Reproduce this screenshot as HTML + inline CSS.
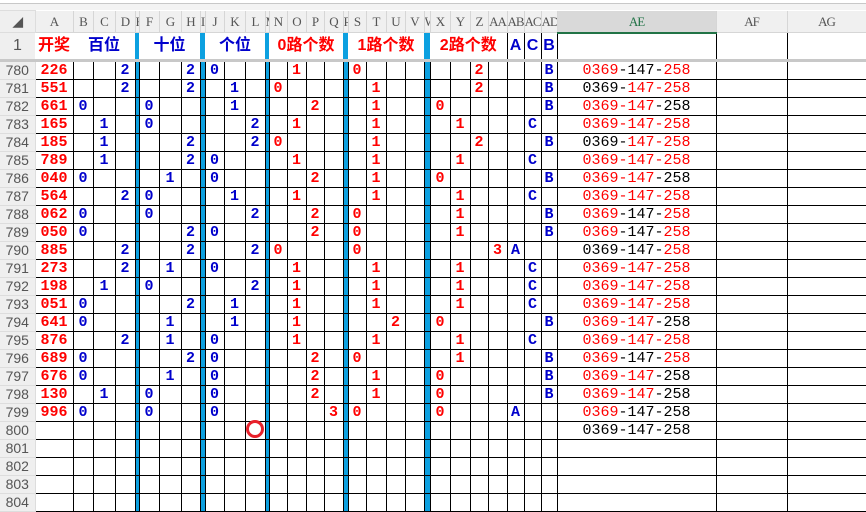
<!DOCTYPE html>
<html><head><meta charset="utf-8"><style>
body{margin:0;width:866px;height:507px;overflow:hidden;background:#fff;position:relative;font-family:"Liberation Mono","Noto Sans CJK SC",monospace}
.top{position:absolute;left:0;top:0;width:866px;height:10px;background:#f3f3f3;border-top:3px solid #fff;box-sizing:border-box}
.top:before{content:"";position:absolute;left:0;right:0;top:0;height:1px;background:#c8c8c8}
table{position:absolute;left:0;top:10px;border-collapse:collapse;table-layout:fixed;width:866px}
td{padding:0;border:1px solid #000;text-align:center;overflow:hidden;white-space:nowrap;font-weight:bold;font-size:15px;line-height:17px;height:17px;max-height:17px}
tr.d{height:18px}
tr.h td{background:#f0f0f0;border:1px solid #d6d6d6;border-top:0;color:#555;font-weight:normal;font-size:13px;height:21px;font-family:"Liberation Serif",serif;letter-spacing:-1px}
tr.h td.ae{background:#d9d9d9;color:#217346;border-bottom:2px solid #217346}
tr td:first-child{background:#efefef;color:#555;font-weight:normal;font-size:14px;border:1px solid #ddd;border-left:0;font-family:"Liberation Sans",sans-serif}
tr.t td{height:25px;border:0;border-bottom:3px solid #c8c8c8;font-size:16px;font-family:"Liberation Sans","Noto Sans CJK SC",sans-serif}
tr.t td.v{border-right:1px solid #000}
tr.t .r{color:#f00}tr.t .b{color:#0000cc}
.s{background:#0ca0e0!important;border-left:1px solid #000;border-right:1px solid #000}
tr.d td:nth-child(2){color:#f00}
tr.d td:nth-child(n+3):nth-child(-n+13){color:#0000cc}
tr.d td:nth-child(n+15):nth-child(-n+28){color:#f00}
tr.d td:nth-child(n+29):nth-child(-n+31){color:#0000cc}
tr.d td:nth-child(6),tr.d td:nth-child(10),tr.d td:nth-child(14),tr.d td:nth-child(19),tr.d td:nth-child(24){background:#0ca0e0}
tr.d td:nth-child(32){font-weight:normal;color:#000;font-size:15px}
i{font-style:normal;color:#f00}
.circ{position:absolute;left:246px;top:420px;width:12px;height:12px;border:3px solid #e8202a;border-radius:50%}
</style></head><body>
<div class="top"></div>
<table>
<colgroup><col style="width:35px"><col style="width:38px"><col style="width:20px"><col style="width:22px"><col style="width:20px"><col style="width:4px"><col style="width:20px"><col style="width:22px"><col style="width:19px"><col style="width:5px"><col style="width:19px"><col style="width:21px"><col style="width:20px"><col style="width:4px"><col style="width:18px"><col style="width:19px"><col style="width:18px"><col style="width:19px"><col style="width:5px"><col style="width:18px"><col style="width:20px"><col style="width:19px"><col style="width:19px"><col style="width:6px"><col style="width:20px"><col style="width:20px"><col style="width:18px"><col style="width:19px"><col style="width:17px"><col style="width:17px"><col style="width:16px"><col style="width:159px"><col style="width:71px"><col style="width:79px"></colgroup>
<tr class="h"><td>◢</td><td>A</td><td>B</td><td>C</td><td>D</td><td>E</td><td>F</td><td>G</td><td>H</td><td>I</td><td>J</td><td>K</td><td>L</td><td>M</td><td>N</td><td>O</td><td>P</td><td>Q</td><td>R</td><td>S</td><td>T</td><td>U</td><td>V</td><td>W</td><td>X</td><td>Y</td><td>Z</td><td>AA</td><td>AB</td><td>AC</td><td>AD</td><td class="ae">AE</td><td>AF</td><td>AG</td></tr>
<tr class="t"><td>1</td><td class="r">开奖</td><td colspan="3" class="b">百位</td><td class="s"></td><td colspan="3" class="b">十位</td><td class="s"></td><td colspan="3" class="b">个位</td><td class="s"></td><td colspan="4" class="r">0路个数</td><td class="s"></td><td colspan="4" class="r">1路个数</td><td class="s"></td><td colspan="4" class="r v">2路个数</td><td class="b v">A</td><td class="b v">C</td><td class="b v">B</td><td class="v"></td><td class="v"></td><td class="v"></td></tr>
<tr class="d"><td>780<td>226<td><td><td>2<td><td><td><td>2<td><td>0<td><td><td><td><td>1<td><td><td><td>0<td><td><td><td><td><td><td>2<td><td><td><td>B<td><i>0369</i>-147-<i>258</i><td><td></tr>
<tr class="d"><td>781<td>551<td><td><td>2<td><td><td><td>2<td><td><td>1<td><td><td>0<td><td><td><td><td><td>1<td><td><td><td><td><td>2<td><td><td><td>B<td>0369-<i>147-258</i><td><td></tr>
<tr class="d"><td>782<td>661<td>0<td><td><td><td>0<td><td><td><td><td>1<td><td><td><td><td>2<td><td><td><td>1<td><td><td><td>0<td><td><td><td><td><td>B<td><i>0369-147</i>-258<td><td></tr>
<tr class="d"><td>783<td>165<td><td>1<td><td><td>0<td><td><td><td><td><td>2<td><td><td>1<td><td><td><td><td>1<td><td><td><td><td>1<td><td><td><td>C<td><td><i>0369-147-258</i><td><td></tr>
<tr class="d"><td>784<td>185<td><td>1<td><td><td><td><td>2<td><td><td><td>2<td><td>0<td><td><td><td><td><td>1<td><td><td><td><td><td>2<td><td><td><td>B<td>0369-<i>147-258</i><td><td></tr>
<tr class="d"><td>785<td>789<td><td>1<td><td><td><td><td>2<td><td>0<td><td><td><td><td>1<td><td><td><td><td>1<td><td><td><td><td>1<td><td><td><td>C<td><td><i>0369-147-258</i><td><td></tr>
<tr class="d"><td>786<td>040<td>0<td><td><td><td><td>1<td><td><td>0<td><td><td><td><td><td>2<td><td><td><td>1<td><td><td><td>0<td><td><td><td><td><td>B<td><i>0369-147</i>-258<td><td></tr>
<tr class="d"><td>787<td>564<td><td><td>2<td><td>0<td><td><td><td><td>1<td><td><td><td>1<td><td><td><td><td>1<td><td><td><td><td>1<td><td><td><td>C<td><td><i>0369-147-258</i><td><td></tr>
<tr class="d"><td>788<td>062<td>0<td><td><td><td>0<td><td><td><td><td><td>2<td><td><td><td>2<td><td><td>0<td><td><td><td><td><td>1<td><td><td><td><td>B<td><i>0369</i>-147-<i>258</i><td><td></tr>
<tr class="d"><td>789<td>050<td>0<td><td><td><td><td><td>2<td><td>0<td><td><td><td><td><td>2<td><td><td>0<td><td><td><td><td><td>1<td><td><td><td><td>B<td><i>0369</i>-147-<i>258</i><td><td></tr>
<tr class="d"><td>790<td>885<td><td><td>2<td><td><td><td>2<td><td><td><td>2<td><td>0<td><td><td><td><td>0<td><td><td><td><td><td><td><td>3<td>A<td><td><td>0369-147-<i>258</i><td><td></tr>
<tr class="d"><td>791<td>273<td><td><td>2<td><td><td>1<td><td><td>0<td><td><td><td><td>1<td><td><td><td><td>1<td><td><td><td><td>1<td><td><td><td>C<td><td><i>0369-147-258</i><td><td></tr>
<tr class="d"><td>792<td>198<td><td>1<td><td><td>0<td><td><td><td><td><td>2<td><td><td>1<td><td><td><td><td>1<td><td><td><td><td>1<td><td><td><td>C<td><td><i>0369-147-258</i><td><td></tr>
<tr class="d"><td>793<td>051<td>0<td><td><td><td><td><td>2<td><td><td>1<td><td><td><td>1<td><td><td><td><td>1<td><td><td><td><td>1<td><td><td><td>C<td><td><i>0369-147-258</i><td><td></tr>
<tr class="d"><td>794<td>641<td>0<td><td><td><td><td>1<td><td><td><td>1<td><td><td><td>1<td><td><td><td><td><td>2<td><td><td>0<td><td><td><td><td><td>B<td><i>0369-147</i>-258<td><td></tr>
<tr class="d"><td>795<td>876<td><td><td>2<td><td><td>1<td><td><td>0<td><td><td><td><td>1<td><td><td><td><td>1<td><td><td><td><td>1<td><td><td><td>C<td><td><i>0369-147-258</i><td><td></tr>
<tr class="d"><td>796<td>689<td>0<td><td><td><td><td><td>2<td><td>0<td><td><td><td><td><td>2<td><td><td>0<td><td><td><td><td><td>1<td><td><td><td><td>B<td><i>0369</i>-147-<i>258</i><td><td></tr>
<tr class="d"><td>797<td>676<td>0<td><td><td><td><td>1<td><td><td>0<td><td><td><td><td><td>2<td><td><td><td>1<td><td><td><td>0<td><td><td><td><td><td>B<td><i>0369-147</i>-258<td><td></tr>
<tr class="d"><td>798<td>130<td><td>1<td><td><td>0<td><td><td><td>0<td><td><td><td><td><td>2<td><td><td><td>1<td><td><td><td>0<td><td><td><td><td><td>B<td><i>0369-147</i>-258<td><td></tr>
<tr class="d"><td>799<td>996<td>0<td><td><td><td>0<td><td><td><td>0<td><td><td><td><td><td><td>3<td><td>0<td><td><td><td><td>0<td><td><td><td>A<td><td><td><i>0369</i>-147-258<td><td></tr>
<tr class="d"><td>800<td><td><td><td><td><td><td><td><td><td><td><td><td><td><td><td><td><td><td><td><td><td><td><td><td><td><td><td><td><td><td>0369-147-258<td><td></tr>
<tr class="d"><td>801<td><td><td><td><td><td><td><td><td><td><td><td><td><td><td><td><td><td><td><td><td><td><td><td><td><td><td><td><td><td><td><td><td></tr>
<tr class="d"><td>802<td><td><td><td><td><td><td><td><td><td><td><td><td><td><td><td><td><td><td><td><td><td><td><td><td><td><td><td><td><td><td><td><td></tr>
<tr class="d"><td>803<td><td><td><td><td><td><td><td><td><td><td><td><td><td><td><td><td><td><td><td><td><td><td><td><td><td><td><td><td><td><td><td><td></tr>
<tr class="d"><td>804<td><td><td><td><td><td><td><td><td><td><td><td><td><td><td><td><td><td><td><td><td><td><td><td><td><td><td><td><td><td><td><td><td></tr>
</table>
<div class="circ"></div>
</body></html>
